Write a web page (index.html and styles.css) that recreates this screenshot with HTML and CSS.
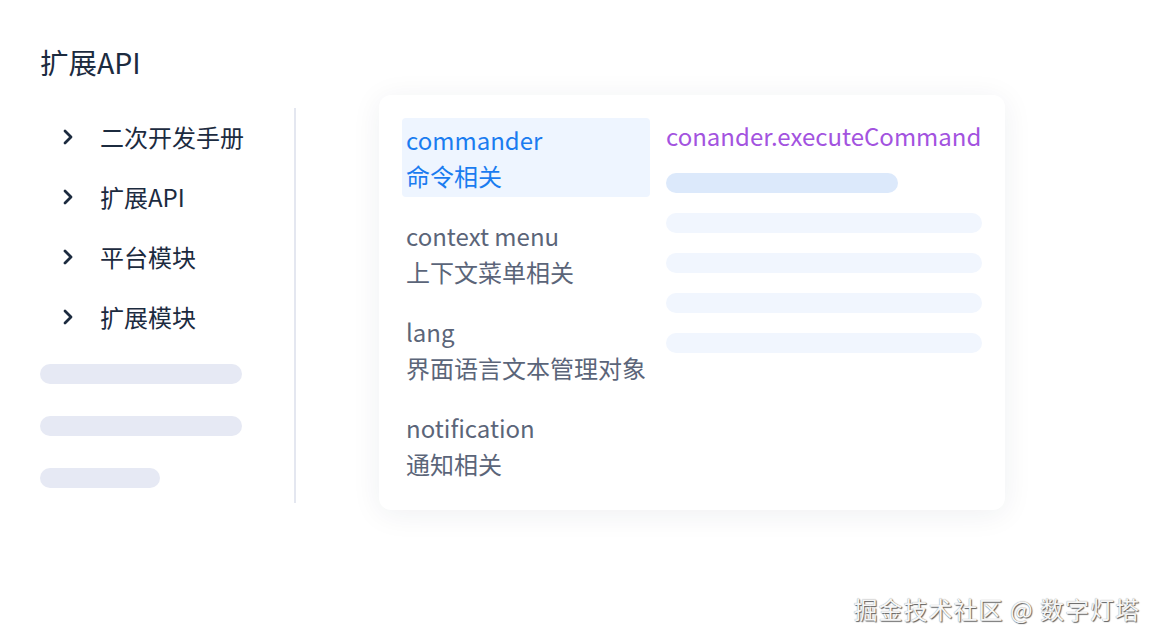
FILE: index.html
```html
<!DOCTYPE html>
<html lang="zh-CN">
<head>
<meta charset="utf-8">
<title>扩展API</title>
<link rel="stylesheet" href="styles.css">
</head>
<body>
<div class="page">
  <h1 class="title">扩展API</h1>
  <div class="main">
    <aside class="sidebar">
      <ul class="nav">
        <li class="nav-item"><svg class="chev" viewBox="0 0 10 16" width="10" height="16"><path d="M2 2 L8 8 L2 14" fill="none" stroke="#1c2b3f" stroke-width="2.8" stroke-linecap="round" stroke-linejoin="round"/></svg><span>二次开发手册</span></li>
        <li class="nav-item"><svg class="chev" viewBox="0 0 10 16" width="10" height="16"><path d="M2 2 L8 8 L2 14" fill="none" stroke="#1c2b3f" stroke-width="2.8" stroke-linecap="round" stroke-linejoin="round"/></svg><span>扩展API</span></li>
        <li class="nav-item"><svg class="chev" viewBox="0 0 10 16" width="10" height="16"><path d="M2 2 L8 8 L2 14" fill="none" stroke="#1c2b3f" stroke-width="2.8" stroke-linecap="round" stroke-linejoin="round"/></svg><span>平台模块</span></li>
        <li class="nav-item"><svg class="chev" viewBox="0 0 10 16" width="10" height="16"><path d="M2 2 L8 8 L2 14" fill="none" stroke="#1c2b3f" stroke-width="2.8" stroke-linecap="round" stroke-linejoin="round"/></svg><span>扩展模块</span></li>
      </ul>
      <div class="skel-list">
        <div class="skel skel-long"></div>
        <div class="skel skel-long"></div>
        <div class="skel skel-short"></div>
      </div>
    </aside>
    <section class="card">
      <div class="api-list">
        <div class="api-item active"><div class="api-name">commander</div><div class="api-desc">命令相关</div></div>
        <div class="api-item"><div class="api-name">context menu</div><div class="api-desc">上下文菜单相关</div></div>
        <div class="api-item"><div class="api-name">lang</div><div class="api-desc">界面语言文本管理对象</div></div>
        <div class="api-item"><div class="api-name">notification</div><div class="api-desc">通知相关</div></div>
      </div>
      <div class="detail">
        <div class="detail-title">conander.executeCommand</div>
        <div class="dbar dbar-main"></div>
        <div class="dbar"></div>
        <div class="dbar"></div>
        <div class="dbar"></div>
        <div class="dbar"></div>
      </div>
    </section>
  </div>
  <div class="watermark">掘金技术社区 @ 数字灯塔</div>
</div>
</body>
</html>
```

FILE: styles.css
```css
* { box-sizing: border-box; }
html, body { margin: 0; padding: 0; background: #ffffff; }
body {
  font-family: "Noto Sans CJK SC", "Noto Sans", sans-serif;
  width: 1160px;
  height: 642px;
  overflow: hidden;
}
.page {
  position: relative;
  width: 1160px;
  height: 642px;
  padding: 45px 0 0 40px;
}
.title {
  margin: 0;
  font-size: 28.5px;
  line-height: 34px;
  font-weight: 400;
  color: #1c2b3f;
}
.main {
  display: flex;
  align-items: flex-start;
  margin-top: 16px;
}
.sidebar {
  width: 256px;
  margin-top: 13px;
  border-right: 2px solid #e4e7f0;
  padding-bottom: 15px;
}
.nav {
  list-style: none;
  margin: -2px 0 0 0;
  padding: 0;
}
.nav-item {
  height: 60px;
  display: flex;
  align-items: center;
  font-size: 24px;
  color: #1c2b3f;
}
.chev {
  margin-left: 23px;
  margin-right: 27px;
  margin-top: 1px;
  flex: none;
}
.skel-list {
  margin-top: 18px;
  display: flex;
  flex-direction: column;
  gap: 32px;
}
.skel {
  height: 20px;
  border-radius: 10px;
  background: #e6e9f4;
}
.skel-long { width: 202px; }
.skel-short { width: 120px; }
.card {
  margin-left: 83px;
  width: 626px;
  height: 415px;
  background: #ffffff;
  border-radius: 12px;
  box-shadow: 0 4px 30px rgba(30, 40, 70, 0.07);
  padding: 23px 23px 0 23px;
  display: flex;
  gap: 16px;
}
.api-list {
  width: 248px;
  display: flex;
  flex-direction: column;
  gap: 17px;
}
.api-item {
  padding: 4px 4px 3px 4px;
  font-size: 24px;
  line-height: 36px;
  color: #5b6579;
  border-radius: 4px;
  white-space: nowrap;
}
.api-item.active {
  background: #eef5ff;
  color: #1a7cf0;
}
.detail {
  flex: 1;
  display: flex;
  flex-direction: column;
}
.detail-title {
  font-size: 24px;
  line-height: 36px;
  color: #a353df;
  margin-bottom: 19px;
  white-space: nowrap;
}
.dbar {
  width: 316px;
  height: 20px;
  border-radius: 10px;
  background: #f1f6fe;
  margin-bottom: 20px;
}
.dbar.dbar-main {
  width: 232px;
  background: #dce9fb;
}
.watermark {
  position: absolute;
  right: 20px;
  bottom: 17px;
  font-size: 24px;
  line-height: 32px;
  color: #f6f6f6;
  text-shadow: 1px 1px 1px #5e5e5e, 0 0 1px #8a8a8a;
  letter-spacing: 1px;
}
```
